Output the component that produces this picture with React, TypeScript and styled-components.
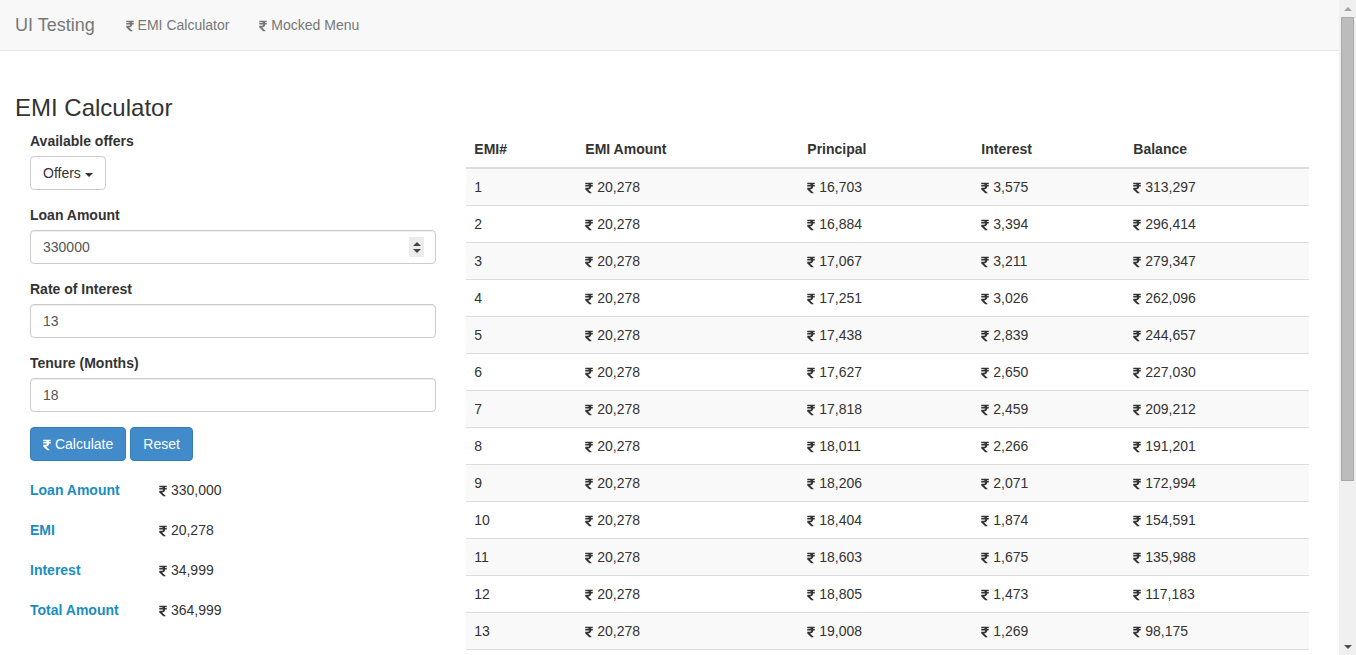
import React from "react";
import styled, { createGlobalStyle } from "styled-components";
import { FaRupeeSign } from "react-icons/fa";

const GlobalStyle = createGlobalStyle`
  html, body {
    margin: 0;
    padding: 0;
    scrollbar-width: none;
  }
  ::-webkit-scrollbar {
    display: none;
  }
  body {
    font-family: "Liberation Sans", Arial, sans-serif;
    font-size: 14px;
    line-height: 1.42857;
    color: #333;
    background: #fff;
  }
  * {
    box-sizing: border-box;
  }
`;

const Page = styled.div`
  padding-right: 17px;
`;

const Scrollbar = styled.div`
  position: fixed;
  top: 0;
  right: 0;
  width: 17px;
  height: 100vh;
  background: #f0f0f0;
  display: flex;
  flex-direction: column;
`;

const ScrollArrow = styled.div<{ $down?: boolean }>`
  height: 17px;
  display: flex;
  align-items: center;
  justify-content: center;
  &::after {
    content: "";
    border-left: 4px solid transparent;
    border-right: 4px solid transparent;
    ${(p) =>
      p.$down
        ? "border-top: 4px solid #505050;"
        : "border-bottom: 4px solid #a3a3a3;"}
  }
`;

const ScrollTrack = styled.div`
  flex: 1;
  padding: 0 2px;
`;

const ScrollThumb = styled.div`
  height: 464px;
  background: #bcbcbc;
  border: 1px solid #a9a9a9;
`;

const Navbar = styled.nav`
  display: flex;
  align-items: center;
  height: 51px;
  background: #f8f8f8;
  border-bottom: 1px solid #e7e7e7;
`;

const Brand = styled.a`
  padding: 15px 16px 15px 15px;
  font-size: 18px;
  line-height: 20px;
  color: #777;
  text-decoration: none;
`;

const NavLink = styled.a`
  padding: 15px;
  line-height: 20px;
  color: #777;
  text-decoration: none;
`;

const Rupee = styled(FaRupeeSign)`
  width: 8px;
  height: 12px;
  vertical-align: -1.5px;
`;

const Container = styled.div`
  padding: 0 15px;
`;

const Title = styled.h3`
  margin: 44px 0 10px;
  font-size: 24px;
  font-weight: 500;
  line-height: 1.1;
  color: #333;
`;

const Columns = styled.div`
  display: grid;
  grid-template-columns: 1fr 2fr;
`;

const FormColumn = styled.div`
  padding: 0 15px;
`;

const TableColumn = styled.div`
  padding: 0 15px 20px;
`;

const FormGroup = styled.div`
  margin-bottom: 15px;
`;

const Label = styled.label`
  display: block;
  margin-bottom: 5px;
  font-weight: bold;
  line-height: 20px;
`;

const InputWrap = styled.div`
  position: relative;
`;

const Input = styled.input`
  display: block;
  width: 100%;
  height: 34px;
  padding: 6px 12px;
  font-family: inherit;
  font-size: 14px;
  color: #555;
  background: #fff;
  border: 1px solid #ccc;
  border-radius: 4px;
  box-shadow: inset 0 1px 1px rgba(0, 0, 0, 0.075);
  outline: none;
`;

const Spinner = styled.div`
  position: absolute;
  right: 12px;
  top: 7px;
  width: 15px;
  height: 20px;
  background: #ececec;
  display: flex;
  flex-direction: column;
  align-items: center;
  justify-content: center;
  gap: 3px;
`;

const Tri = styled.span<{ $down?: boolean }>`
  width: 0;
  height: 0;
  border-left: 4px solid transparent;
  border-right: 4px solid transparent;
  ${(p) =>
    p.$down
      ? "border-top: 4px solid #444;"
      : "border-bottom: 4px solid #444;"}
`;

const Button = styled.button<{ $primary?: boolean }>`
  display: inline-block;
  height: 34px;
  padding: 6px 12px;
  font-family: inherit;
  font-size: 14px;
  line-height: 20px;
  border-radius: 4px;
  cursor: pointer;
  color: ${(p) => (p.$primary ? "#fff" : "#333")};
  background: ${(p) => (p.$primary ? "#428bca" : "#fff")};
  border: 1px solid ${(p) => (p.$primary ? "#357ebd" : "#ccc")};
`;

const Caret = styled.span`
  display: inline-block;
  vertical-align: middle;
  border-left: 4px solid transparent;
  border-right: 4px solid transparent;
  border-top: 4px solid #333;
`;

const ButtonRow = styled.div`
  display: flex;
  gap: 4px;
`;

const Results = styled.div`
  margin-top: 10px;
`;

const ResultRow = styled.div`
  display: grid;
  grid-template-columns: 129px 1fr;
  height: 40px;
  align-items: center;
`;

const ResultLabel = styled.span`
  font-weight: bold;
  color: #1b8dbf;
`;

const Table = styled.table`
  width: 100%;
  border-collapse: collapse;
  border-spacing: 0;
  table-layout: fixed;
`;

const Th = styled.th`
  padding: 8px;
  text-align: left;
  line-height: 20px;
  font-weight: bold;
  border-bottom: 2px solid #ddd;
`;

const Tr = styled.tr<{ $striped?: boolean }>`
  background: ${(p) => (p.$striped ? "#f9f9f9" : "#fff")};
`;

const Td = styled.td`
  padding: 8px;
  line-height: 20px;
  border-bottom: 1px solid #ddd;
`;

const rows: [number, string, string, string, string][] = [
  [1, "20,278", "16,703", "3,575", "313,297"],
  [2, "20,278", "16,884", "3,394", "296,414"],
  [3, "20,278", "17,067", "3,211", "279,347"],
  [4, "20,278", "17,251", "3,026", "262,096"],
  [5, "20,278", "17,438", "2,839", "244,657"],
  [6, "20,278", "17,627", "2,650", "227,030"],
  [7, "20,278", "17,818", "2,459", "209,212"],
  [8, "20,278", "18,011", "2,266", "191,201"],
  [9, "20,278", "18,206", "2,071", "172,994"],
  [10, "20,278", "18,404", "1,874", "154,591"],
  [11, "20,278", "18,603", "1,675", "135,988"],
  [12, "20,278", "18,805", "1,473", "117,183"],
  [13, "20,278", "19,008", "1,269", "98,175"],
  [14, "20,278", "19,214", "1,064", "78,961"],
  [15, "20,278", "19,422", "855", "59,538"],
  [16, "20,278", "19,633", "645", "39,905"],
  [17, "20,278", "19,846", "432", "20,060"],
  [18, "20,278", "20,061", "217", "0"],
];

const summary = [
  ["Loan Amount", "330,000"],
  ["EMI", "20,278"],
  ["Interest", "34,999"],
  ["Total Amount", "364,999"],
];

const Amount = ({ value }: { value: string }) => (
  <span>
    <Rupee /> {value}
  </span>
);

export default function App() {
  return (
    <Page>
      <GlobalStyle />
      <Navbar>
        <Brand href="#">UI Testing</Brand>
        <NavLink href="#">
          <Rupee /> EMI Calculator
        </NavLink>
        <NavLink href="#">
          <Rupee /> Mocked Menu
        </NavLink>
      </Navbar>
      <Container>
        <Title>EMI Calculator</Title>
        <Columns>
          <FormColumn>
            <FormGroup>
              <Label>Available offers</Label>
              <Button type="button">
                Offers <Caret />
              </Button>
            </FormGroup>
            <FormGroup>
              <Label>Loan Amount</Label>
              <InputWrap>
                <Input defaultValue="330000" />
                <Spinner>
                  <Tri />
                  <Tri $down />
                </Spinner>
              </InputWrap>
            </FormGroup>
            <FormGroup>
              <Label>Rate of Interest</Label>
              <Input defaultValue="13" />
            </FormGroup>
            <FormGroup>
              <Label>Tenure (Months)</Label>
              <Input defaultValue="18" />
            </FormGroup>
            <ButtonRow>
              <Button $primary type="button">
                <Rupee /> Calculate
              </Button>
              <Button $primary type="button">
                Reset
              </Button>
            </ButtonRow>
            <Results>
              {summary.map(([label, value]) => (
                <ResultRow key={label}>
                  <ResultLabel>{label}</ResultLabel>
                  <Amount value={value} />
                </ResultRow>
              ))}
            </Results>
          </FormColumn>
          <TableColumn>
            <Table>
              <colgroup>
                <col style={{ width: 111 }} />
                <col style={{ width: 222 }} />
                <col style={{ width: 174 }} />
                <col style={{ width: 152 }} />
                <col />
              </colgroup>
              <thead>
                <tr>
                  <Th>EMI#</Th>
                  <Th>EMI Amount</Th>
                  <Th>Principal</Th>
                  <Th>Interest</Th>
                  <Th>Balance</Th>
                </tr>
              </thead>
              <tbody>
                {rows.map(([n, emi, principal, interest, balance]) => (
                  <Tr key={n} $striped={n % 2 === 1}>
                    <Td>{n}</Td>
                    <Td>
                      <Amount value={emi} />
                    </Td>
                    <Td>
                      <Amount value={principal} />
                    </Td>
                    <Td>
                      <Amount value={interest} />
                    </Td>
                    <Td>
                      <Amount value={balance} />
                    </Td>
                  </Tr>
                ))}
              </tbody>
            </Table>
          </TableColumn>
        </Columns>
      </Container>
      <Scrollbar>
        <ScrollArrow />
        <ScrollTrack>
          <ScrollThumb />
        </ScrollTrack>
        <ScrollArrow $down />
      </Scrollbar>
    </Page>
  );
}
